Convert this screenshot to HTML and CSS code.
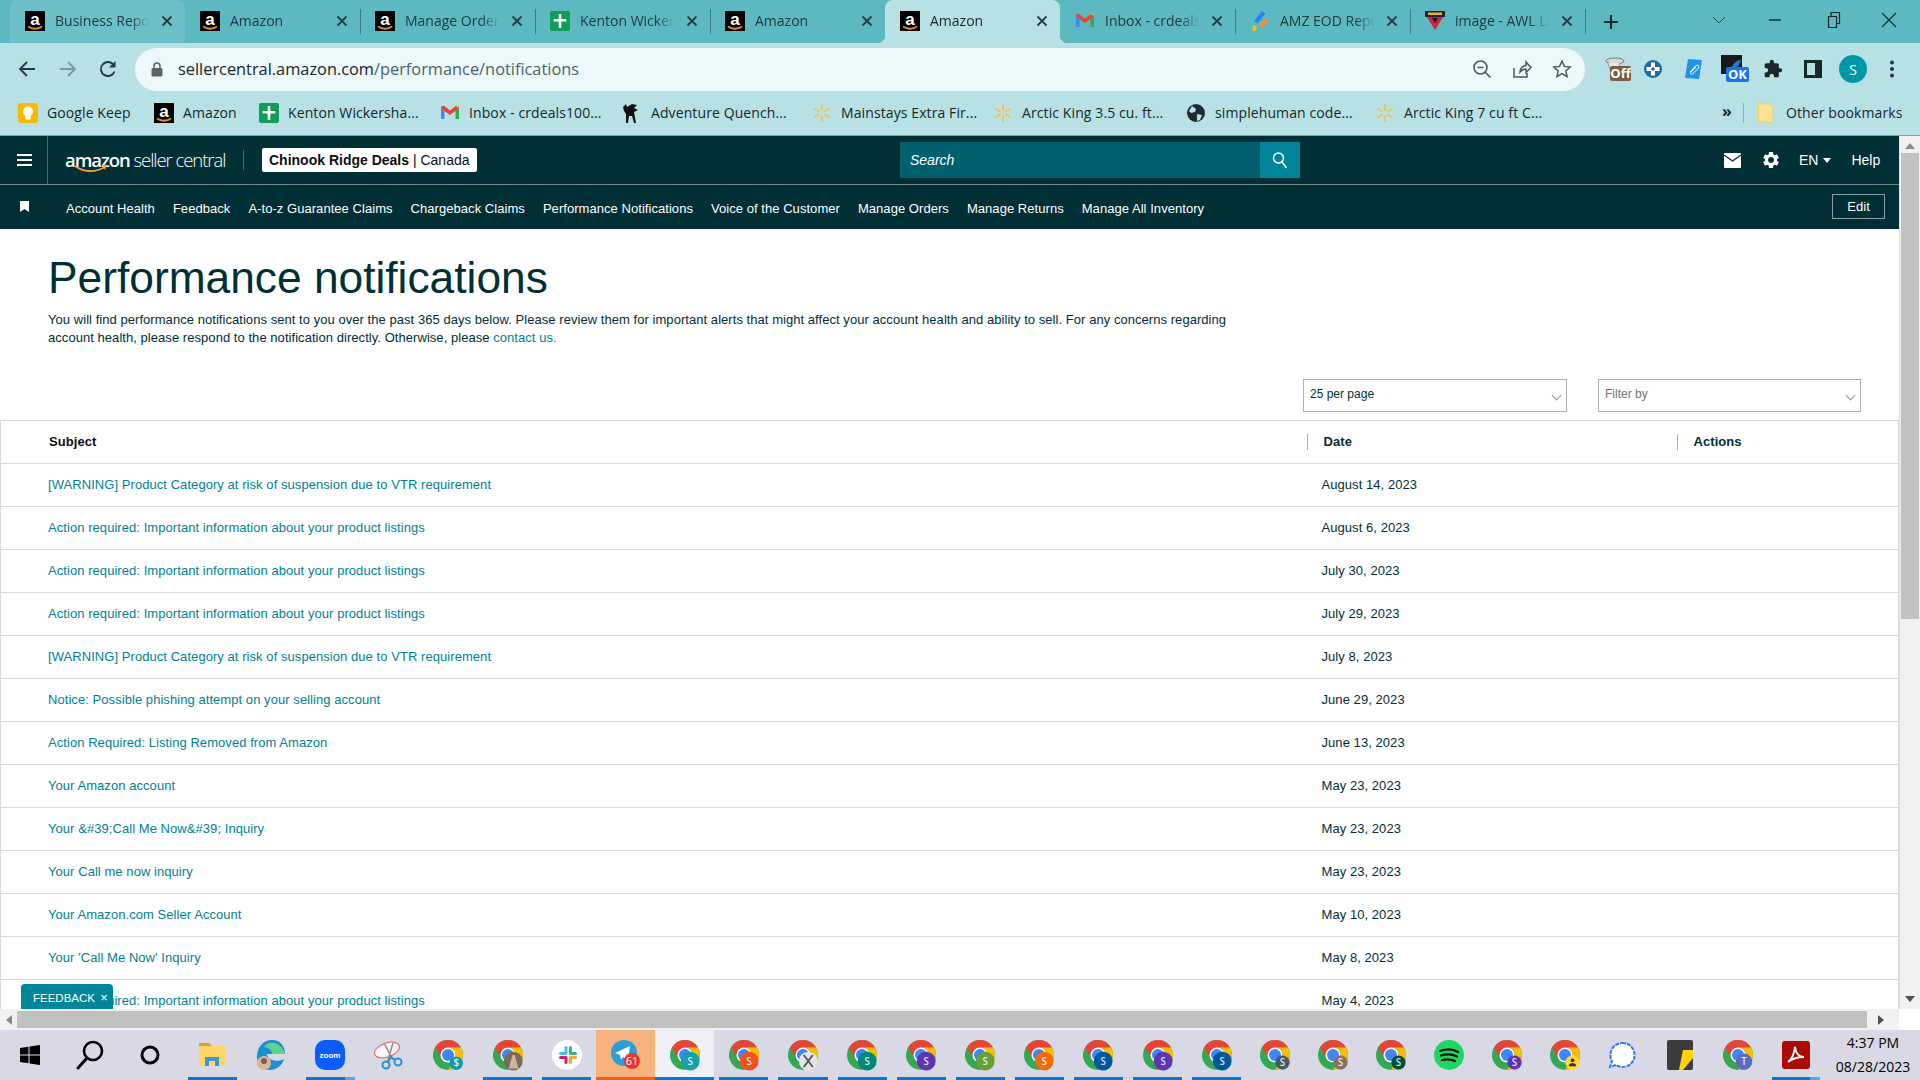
FILE: index.html
```html
<!DOCTYPE html>
<html lang="en">

<head>
    <title>Performance notifications</title>
    <meta charset="utf-8" />
    <link rel="stylesheet" href="styles.css">
</head>

<body>
    <svg class="defs" aria-hidden="true">
        <symbol id="amz" viewBox="0 0 20 20">
            <rect width="20" height="20" fill="#000" />
            <text x="10" y="14" text-anchor="middle" font-family="Liberation Sans" font-weight="700" font-size="17" fill="#fff">a</text>
            <path d="M3 15.500c4 3 10 3 14 0" fill="none" stroke="#e58a1f" stroke-width="1.800" />
        </symbol>
        <symbol id="plus-doc" viewBox="0 0 20 20">
            <rect width="20" height="20" rx="2" fill="#0f9d58" />
            <path d="M8.700 3h2.600v5h5v2.600h-5V17H8.700v-6.400h-5V8h5z" fill="#fff" />
        </symbol>
        <symbol id="gmail" viewBox="0 0 20 20">
            <path d="M1 5v11h3.500V8z" fill="#4285f4" />
            <path d="M19 5v11h-3.500V8z" fill="#34a853" />
            <path d="M1 5l3.500 3L10 12l5.500-4L19 5c0-2-2-2.800-3.500-1.700L10 7.500 4.500 3.300C3 2.200 1 3 1 5z" fill="#ea4335" />
            <path d="M15.500 3.300L19 5c0-2-2-2.800-3.500-1.700z" fill="#fbbc04" />
        </symbol>
        <symbol id="spark" viewBox="0 0 20 20">
            <path d="M10 2v5M10 13v5M3 6l4 2.500M13 11.500L17 14M3 14l4-2.500M13 8.500L17 6" stroke="#f2c14e" stroke-width="1.800" stroke-linecap="round" fill="none" />
        </symbol>
        <symbol id="chrome" viewBox="0 0 40 40">
            <circle cx="20" cy="20" r="20" fill="#34a853" />
            <path d="M20 0A20 20 0 0 0 2.700 10L11.300 25A10 10 0 0 1 20 10H37.300A20 20 0 0 0 20 0Z" fill="#ea4335" />
            <path d="M37.300 10H20A10 10 0 0 1 28.700 25L20 40A20 20 0 0 0 37.300 10Z" fill="#fbbc04" />
            <circle cx="20" cy="20" r="10" fill="#fff" />
            <circle cx="20" cy="20" r="8" fill="#4285f4" />
        </symbol>
        <symbol id="close-x" viewBox="0 0 14 14">
            <path d="M2.500 2.500l9 9M11.500 2.500l-9 9" stroke="#2b3a3d" stroke-width="1.800" fill="none" />
        </symbol>
    </svg>

    <div class="window">
        <div class="tabstrip">
            <div class="tab tab-hover"><svg class="fav"><use href="#amz" /></svg><span class="tab-title">Business Reports</span><svg class="tab-close"><use href="#close-x" /></svg></div>
            <div class="tab"><svg class="fav"><use href="#amz" /></svg><span class="tab-title">Amazon</span><svg class="tab-close"><use href="#close-x" /></svg></div>
            <div class="tab tab-sep"><svg class="fav"><use href="#amz" /></svg><span class="tab-title">Manage Orders</span><svg class="tab-close"><use href="#close-x" /></svg></div>
            <div class="tab tab-sep"><svg class="fav"><use href="#plus-doc" /></svg><span class="tab-title">Kenton Wickersham</span><svg class="tab-close"><use href="#close-x" /></svg></div>
            <div class="tab tab-sep"><svg class="fav"><use href="#amz" /></svg><span class="tab-title">Amazon</span><svg class="tab-close"><use href="#close-x" /></svg></div>
            <div class="tab tab-active"><svg class="fav"><use href="#amz" /></svg><span class="tab-title">Amazon</span><svg class="tab-close"><use href="#close-x" /></svg></div>
            <div class="tab"><svg class="fav"><use href="#gmail" /></svg><span class="tab-title">Inbox - crdeals100</span><svg class="tab-close"><use href="#close-x" /></svg></div>
            <div class="tab tab-sep">
                <svg class="fav" viewBox="0 0 20 20"><path d="M4 10L12 0l3.500 2.500-8 10z" fill="#2684ff" /><path d="M9 14l6-6.500 3 2.500-6 7z" fill="#ff8b2c" /><path d="M3 14l4 2-1.500 4H2.500z" fill="#ffc400" /></svg>
                <span class="tab-title">AMZ EOD Report</span><svg class="tab-close"><use href="#close-x" /></svg>
            </div>
            <div class="tab tab-sep">
                <svg class="fav" viewBox="0 0 20 20"><rect x="0" y="0" width="20" height="6" fill="#2b1b3d" /><path d="M2 6h16l-8 13z" fill="#d5203a" /><path d="M7 7h6l-3 5z" fill="#1c1c1c" /><rect x="3" y="1.500" width="14" height="2.500" fill="#e5b62f" /></svg>
                <span class="tab-title">image - AWL Label</span><svg class="tab-close"><use href="#close-x" /></svg>
            </div>
            <div class="new-tab tab-sep"><svg width="16" height="16" viewBox="0 0 16 16"><path d="M8 1v14M1 8h14" stroke="#17282b" stroke-width="2" /></svg></div>
            <div class="window-controls">
                <svg width="14" height="14" viewBox="0 0 14 14"><path d="M1 4l6 6 6-6" stroke="#25474c" fill="none" /></svg>
                <svg width="14" height="14" viewBox="0 0 14 14"><path d="M1 7h12" stroke="#17282b" stroke-width="1.400" /></svg>
                <svg width="14" height="18" viewBox="0 0 14 18"><path d="M1.500 5.500h8v11h-8zM4 5.500v-4h8.500v11H9.500" stroke="#17282b" fill="none" stroke-width="1.200" /></svg>
                <svg width="16" height="16" viewBox="0 0 16 16"><path d="M1 1l14 14M15 1L1 15" stroke="#17282b" stroke-width="1.100" /></svg>
            </div>
        </div>

        <div class="toolbar">
            <div class="nav-btns">
                <svg width="20" height="20" viewBox="0 0 20 20"><path d="M18 10H3M10 3l-7 7 7 7" stroke="#26383b" stroke-width="1.800" fill="none" /></svg>
                <svg width="20" height="20" viewBox="0 0 20 20"><path d="M2 10h15M10 3l7 7-7 7" stroke="#7f979b" stroke-width="1.800" fill="none" /></svg>
                <svg width="20" height="20" viewBox="0 0 20 20"><path d="M16.500 12.500A7 7 0 1 1 15 5.200" stroke="#26383b" stroke-width="1.900" fill="none" /><path d="M17.500 2v6.500H11z" fill="#26383b" /></svg>
            </div>
            <div class="omnibox">
                <svg width="12" height="15" viewBox="0 0 12 15"><path d="M3 6V4a3 3 0 0 1 6 0v2" stroke="#5f6368" stroke-width="1.500" fill="none" /><rect x="0.500" y="6" width="11" height="8.500" rx="1.500" fill="#5f6368" /></svg>
                <span class="url">sellercentral.amazon.com<span class="url-path">/performance/notifications</span></span>
                <div class="omni-icons">
                    <svg width="20" height="20" viewBox="0 0 20 20"><circle cx="8.500" cy="8.500" r="6.500" stroke="#4a5a5d" stroke-width="1.600" fill="none" /><path d="M13 13l5.500 5.500M5.500 8.500h6" stroke="#4a5a5d" stroke-width="1.600" /></svg>
                    <svg width="20" height="20" viewBox="0 0 20 20"><path d="M2 9v9h13v-4M8 13c0-4 3-6.500 6-6.500V3l5 5.500-5 5V10c-2.500 0-4.500 1-6 3z" stroke="#4a5a5d" stroke-width="1.500" fill="none" /></svg>
                    <svg width="20" height="20" viewBox="0 0 20 20"><path d="M10 2l2.400 5.400 5.800.6-4.400 3.900 1.300 5.700L10 14.600l-5.100 3 1.300-5.700L1.800 8l5.800-.6z" stroke="#4a5a5d" stroke-width="1.500" fill="none" /></svg>
                </div>
            </div>
            <div class="ext-icons">
                <svg width="28" height="28" viewBox="0 0 28 28"><ellipse cx="12" cy="6" rx="9" ry="3" fill="#d9d9d9" stroke="#7c7c7c" /><path d="M5 8l3 10h6l3-10" fill="#e8e8e8" stroke="#9a9a9a" /><rect x="7" y="11" width="21" height="15" rx="2" fill="#7a5f42" /><text x="17.500" y="23" text-anchor="middle" class="ext-off">Off</text></svg>
                <svg width="20" height="20" viewBox="0 0 20 20"><circle cx="10" cy="10" r="9" fill="#236a96" /><path d="M8 3.500h4V8h4.500v4H12v4.500H8V12H3.500V8H8z" fill="#fff" /><circle cx="10" cy="10" r="1.800" fill="#236a96" /></svg>
                <svg width="20" height="22" viewBox="0 0 20 22"><path d="M5 1l14 1-3 19-14-1z" fill="#1e96e8" /><path d="M7 14l6-6.500a1.800 1.800 0 0 1 2.500 2.500L9.500 16a1.200 1.200 0 0 1-1.700-1.700L13 9" stroke="#fff" fill="none" /></svg>
                <svg width="28" height="28" viewBox="0 0 28 28"><rect x="0" y="0" width="21" height="19" fill="#17191c" /><path d="M10 14c2-6 6-9 10-9-1 5-5 9-10 9z" fill="#1c7fd6" /><rect x="5" y="12" width="23" height="15" rx="2" fill="#1a73e8" /><text x="16.500" y="24" text-anchor="middle" class="ext-ok">OK</text></svg>
                <svg width="20" height="20" viewBox="0 0 24 24"><path d="M20.500 11H19V7c0-1.100-.9-2-2-2h-4V3.500C13 2.120 11.880 1 10.500 1S8 2.120 8 3.500V5H4c-1.100 0-1.990.9-1.990 2v3.800H3.500c1.490 0 2.700 1.210 2.700 2.700s-1.210 2.700-2.700 2.700H2V20c0 1.100.9 2 2 2h3.800v-1.500c0-1.490 1.210-2.700 2.700-2.700 1.490 0 2.700 1.210 2.700 2.700V22H17c1.100 0 2-.9 2-2v-4h1.500c1.380 0 2.500-1.120 2.500-2.500S21.880 11 20.500 11z" fill="#17282b" /></svg>
                <svg width="18" height="18" viewBox="0 0 18 18"><path d="M0 0h18v18H0zM3 3v12h8V3z" fill="#17282b" fill-rule="evenodd" /></svg>
                <span class="avatar">S</span>
                <svg width="6" height="18" viewBox="0 0 6 18"><circle cx="3" cy="2.500" r="2" fill="#26383b" /><circle cx="3" cy="9" r="2" fill="#26383b" /><circle cx="3" cy="15.500" r="2" fill="#26383b" /></svg>
            </div>
        </div>

        <div class="bookmarks">
            <span class="bm bm-keep"><svg class="fav" viewBox="0 0 20 20"><rect width="20" height="20" rx="3" fill="#fbb900" /><circle cx="10" cy="8.500" r="5" fill="#fff" /><rect x="7.500" y="13" width="5" height="3.500" fill="#fff" /></svg>Google Keep</span>
            <span class="bm bm-amazon"><svg class="fav"><use href="#amz" /></svg>Amazon</span>
            <span class="bm bm-kenton"><svg class="fav"><use href="#plus-doc" /></svg>Kenton Wickersha...</span>
            <span class="bm bm-inbox"><svg class="fav"><use href="#gmail" /></svg>Inbox - crdeals100...</span>
            <span class="bm bm-adventure"><svg class="fav" viewBox="0 0 20 20"><path d="M1 4l3-3 1 3 5-3 5 1-3 3 4 2-4 2 2 11h-2l-2-7H7l-1 7H4V11L2 8z" fill="#111" /></svg>Adventure Quench...</span>
            <span class="bm bm-mainstays"><svg class="fav"><use href="#spark" /></svg>Mainstays Extra Fir...</span>
            <span class="bm bm-arctic"><svg class="fav"><use href="#spark" /></svg>Arctic King 3.5 cu. ft...</span>
            <span class="bm bm-simple"><svg class="fav" viewBox="0 0 20 20"><circle cx="10" cy="10" r="9" fill="#1d2b2e" /><path d="M6 3l4 3-1 3-4 1-2-2zM11 11l5 1-2 5-3 1z" fill="#b8e1e5" /></svg>simplehuman code...</span>
            <span class="bm bm-arctic7"><svg class="fav"><use href="#spark" /></svg>Arctic King 7 cu ft C...</span>
            <span class="bm-more">»</span>
            <span class="bm bm-other"><svg class="fav-folder" viewBox="0 0 16 22"><path d="M0 1h12l4 3v17H0z" fill="#fde293" stroke="#f2cd5c" /></svg>Other bookmarks</span>
        </div>

        <div class="viewport">
            <div class="page">
                <header class="sc-top">
                    <div class="burger"><span></span><span></span><span></span></div>
                    <div class="sc-logo">
                        <div class="logo-word"><b>amazon</b> seller central</div>
                        <svg class="logo-smile" viewBox="0 0 34 8"><path d="M1 1c8 6 20 7 30 1" stroke="#f2a33a" stroke-width="1.800" fill="none" /><path d="M33 0l-5 0 3 5z" fill="#f2a33a" /></svg>
                    </div>
                    <div class="sc-account"><span><b>Chinook Ridge Deals</b> | Canada</span></div>
                    <div class="sc-search">
                        <span class="sc-search-input">Search</span>
                        <span class="sc-search-btn"><svg width="16" height="18" viewBox="0 0 16 18"><circle cx="6.500" cy="7" r="5" stroke="#fff" stroke-width="1.500" fill="none" /><path d="M10 11l4.500 6" stroke="#fff" stroke-width="1.500" /></svg></span>
                    </div>
                    <div class="sc-right">
                        <svg width="17" height="15" viewBox="0 0 17 15"><path d="M1 0h15a1 1 0 0 1 1 1v13a1 1 0 0 1-1 1H1a1 1 0 0 1-1-1V1a1 1 0 0 1 1-1z" fill="#fff" /><path d="M0 2l8.500 6L17 2" stroke="#002f36" stroke-width="1.400" fill="none" /></svg>
                        <svg width="20" height="20" viewBox="0 0 24 24"><path fill="#fff" fill-rule="evenodd" d="M19.140 12.940c.04-.3.06-.61.06-.94 0-.32-.02-.64-.07-.94l2.030-1.580c.18-.14.23-.41.12-.61l-1.920-3.320c-.12-.22-.37-.29-.59-.22l-2.390.96c-.5-.38-1.030-.7-1.620-.94l-.36-2.540c-.04-.24-.24-.41-.48-.41h-3.840c-.24 0-.43.17-.47.41l-.36 2.540c-.59.24-1.130.57-1.620.94l-2.390-.96c-.22-.08-.47 0-.59.22L2.740 8.870c-.12.21-.08.47.12.61l2.030 1.580c-.05.3-.09.63-.09.94s.02.64.07.94l-2.030 1.580c-.18.14-.23.41-.12.61l1.920 3.320c.12.22.37.29.59.22l2.390-.96c.5.38 1.030.7 1.620.94l.36 2.540c.05.24.24.41.48.41h3.840c.24 0 .44-.17.47-.41l.36-2.540c.59-.24 1.130-.56 1.620-.94l2.390.96c.22.08.47 0 .59-.22l1.920-3.320c.12-.22.07-.47-.12-.61l-2.010-1.580zM12 15.600c-1.980 0-3.600-1.620-3.600-3.600s1.620-3.600 3.600-3.600 3.600 1.620 3.600 3.600-1.620 3.600-3.600 3.600z" /></svg>
                        <span class="sc-lang">EN<i class="caret"></i></span>
                        <span class="sc-help">Help</span>
                    </div>
                </header>
                <nav class="sc-nav">
                    <svg class="sc-mark" width="9" height="11" viewBox="0 0 9 11"><path d="M0 0h9v11L4.500 8 0 11z" fill="#fff" /></svg>
                    <a>Account Health</a>
                    <a>Feedback</a>
                    <a>A-to-z Guarantee Claims</a>
                    <a>Chargeback Claims</a>
                    <a>Performance Notifications</a>
                    <a>Voice of the Customer</a>
                    <a>Manage Orders</a>
                    <a>Manage Returns</a>
                    <a>Manage All Inventory</a>
                    <span class="sc-edit">Edit</span>
                </nav>

                <main class="content">
                    <h1>Performance notifications</h1>
                    <p class="intro">You will find performance notifications sent to you over the past 365 days below. Please review them for important alerts that might affect your account health and ability to sell. For any concerns regarding account health, please respond to the notification directly. Otherwise, please <a>contact us.</a></p>
                    <div class="filters">
                        <div class="select">25 per page<i class="chev"></i></div>
                        <div class="select select-muted">Filter by<i class="chev"></i></div>
                    </div>
                    <table class="notifications">
                        <thead>
                            <tr>
                                <th class="col-subject">Subject</th>
                                <th class="col-date"><span>Date</span></th>
                                <th class="col-actions"><span>Actions</span></th>
                            </tr>
                        </thead>
                        <tbody>
                            <tr><td><a>[WARNING] Product Category at risk of suspension due to VTR requirement</a></td><td>August 14, 2023</td><td></td></tr>
                            <tr><td><a>Action required: Important information about your product listings</a></td><td>August 6, 2023</td><td></td></tr>
                            <tr><td><a>Action required: Important information about your product listings</a></td><td>July 30, 2023</td><td></td></tr>
                            <tr><td><a>Action required: Important information about your product listings</a></td><td>July 29, 2023</td><td></td></tr>
                            <tr><td><a>[WARNING] Product Category at risk of suspension due to VTR requirement</a></td><td>July 8, 2023</td><td></td></tr>
                            <tr><td><a>Notice: Possible phishing attempt on your selling account</a></td><td>June 29, 2023</td><td></td></tr>
                            <tr><td><a>Action Required: Listing Removed from Amazon</a></td><td>June 13, 2023</td><td></td></tr>
                            <tr><td><a>Your Amazon account</a></td><td>May 23, 2023</td><td></td></tr>
                            <tr><td><a>Your &amp;#39;Call Me Now&amp;#39; Inquiry</a></td><td>May 23, 2023</td><td></td></tr>
                            <tr><td><a>Your Call me now inquiry</a></td><td>May 23, 2023</td><td></td></tr>
                            <tr><td><a>Your Amazon.com Seller Account</a></td><td>May 10, 2023</td><td></td></tr>
                            <tr><td><a>Your 'Call Me Now' Inquiry</a></td><td>May 8, 2023</td><td></td></tr>
                            <tr><td><a>Action required: Important information about your product listings</a></td><td>May 4, 2023</td><td></td></tr>
                        </tbody>
                    </table>
                </main>
                <div class="feedback">FEEDBACK <span>×</span></div>
            </div>
            <div class="vscroll">
                <i class="arrow arrow-up"></i>
                <div class="vthumb"></div>
                <i class="arrow arrow-down"></i>
            </div>
        </div>

        <div class="hscroll">
            <i class="arrow arrow-left"></i>
            <div class="hthumb"></div>
            <i class="arrow arrow-right"></i>
            <div class="corner"></div>
        </div>

        <div class="taskbar">
            <div class="tb-start">
                <svg width="20" height="20" viewBox="0 0 20 20"><path d="M0 3l8.500-1.200V9.500H0zM9.500 1.600L20 0v9.500H9.500zM0 10.500h8.500v7.700L0 17zM9.500 10.500H20V20L9.500 18.400z" fill="#000" /></svg>
            </div>
            <div class="tb-start">
                <svg width="28" height="30" viewBox="0 0 28 30"><circle cx="17" cy="11" r="9" stroke="#000" stroke-width="2.600" fill="none" /><path d="M11 18L2 28" stroke="#000" stroke-width="3" stroke-linecap="round" /></svg>
            </div>
            <div class="tb-start tb-start-last">
                <svg width="20" height="20" viewBox="0 0 20 20"><circle cx="10" cy="10" r="8" stroke="#000" stroke-width="3" fill="none" /></svg>
            </div>

            <div class="tb-item on"><svg viewBox="0 0 30 30"><path d="M2 3h10l3 3H2z" fill="#e0a21b" /><rect x="2" y="6" width="26" height="20" fill="#fcd766" /><path d="M8 26v-9h14v9h-4v-5h-6v5z" fill="#3e96dc" /></svg></div>
            <div class="tb-item"><svg viewBox="0 0 30 30"><path d="M1 15C2 6 8 0 16 0c8 0 13 6 13 14H11c0 6 10 9 17 5-2 7-8 11-14 11C6 30 0 24 1 15z" fill="#1b8fd2" /><path d="M8 7c5-7 17-6 21 7H16c0-4-4-7-8-7z" fill="#5fd38a" /><circle cx="8" cy="23" r="7" fill="#d9b99b" /><circle cx="8" cy="21" r="3" fill="#8c5a3c" /></svg></div>
            <div class="tb-item on on-multi"><svg viewBox="0 0 30 30"><rect width="30" height="30" rx="10" fill="#0b5cff" /><text x="15" y="18" text-anchor="middle" class="tb-zoom">zoom</text></svg></div>
            <div class="tb-item"><svg viewBox="0 0 30 30"><ellipse cx="13" cy="10" rx="13" ry="7" transform="rotate(-20 13 10)" fill="#fdf4f4" stroke="#e05a5a" /><path d="M10 3l9 17M19 3l-5 17" stroke="#8d8d8d" stroke-width="1.500" /><circle cx="12" cy="25" r="3.500" fill="none" stroke="#2e8ed6" stroke-width="2" /><circle cx="24" cy="22" r="3.500" fill="none" stroke="#2e8ed6" stroke-width="2" /><path d="M14 22l3-5 4 3" stroke="#2e8ed6" stroke-width="2" fill="none" /></svg></div>
            <div class="tb-item"><svg viewBox="0 0 40 40"><use href="#chrome" /><circle cx="31" cy="31" r="9" fill="#0e9aa7" /><text x="31" y="35" text-anchor="middle" class="badge-s">$</text></svg></div>
            <div class="tb-item on"><svg viewBox="0 0 40 40"><use href="#chrome" /><circle cx="27" cy="28" r="12.500" fill="#7b6a58" /><path d="M21 38l5-18h3l5 18z" fill="#c9b7a4" /></svg></div>
            <div class="tb-item on"><svg viewBox="0 0 30 30"><circle cx="15" cy="15" r="15" fill="#fff" /><rect x="12.500" y="6" width="3" height="8" rx="1.500" fill="#36c5f0" /><rect x="7" y="12" width="8" height="3" rx="1.500" fill="#36c5f0" /><rect x="17" y="6" width="3" height="8" rx="1.500" fill="#2eb67d" /><rect x="17" y="12" width="8" height="3" rx="1.500" fill="#2eb67d" /><rect x="17" y="16" width="3" height="8" rx="1.500" fill="#ecb22e" /><rect x="17" y="16" width="8" height="3" rx="1.500" fill="#ecb22e" /><rect x="12.500" y="16" width="3" height="8" rx="1.500" fill="#e01e5a" /><rect x="7" y="16" width="8" height="3" rx="1.500" fill="#e01e5a" /></svg></div>
            <div class="tb-item on-orange"><svg viewBox="0 0 30 30"><circle cx="13" cy="14" r="13" fill="#2a9ed8" /><path d="M4 14l15-7-2 14-5-3-2 3-1-5z" fill="#fff" /><circle cx="21" cy="22" r="8" fill="#e8372c" /><text x="21" y="26" text-anchor="middle" class="badge-n">61</text></svg></div>
            <div class="tb-item on on-active"><svg viewBox="0 0 40 40"><use href="#chrome" /><circle cx="27" cy="28" r="12.500" fill="#17a0ad" /><text x="27" y="33" text-anchor="middle" class="badge-s">S</text></svg></div>
            <div class="tb-item on"><svg viewBox="0 0 40 40"><use href="#chrome" /><circle cx="27" cy="28" r="12.500" fill="#f4511e" /><text x="27" y="33" text-anchor="middle" class="badge-s">S</text></svg></div>
            <div class="tb-item on"><svg viewBox="0 0 40 40"><use href="#chrome" /><circle cx="27" cy="28" r="12.500" fill="#e5e5e5" /><path d="M21 20l12 16M33 20L21 36" stroke="#555" stroke-width="2.500" /></svg></div>
            <div class="tb-item on"><svg viewBox="0 0 40 40"><use href="#chrome" /><circle cx="27" cy="28" r="12.500" fill="#00897b" /><text x="27" y="33" text-anchor="middle" class="badge-s">S</text></svg></div>
            <div class="tb-item on"><svg viewBox="0 0 40 40"><use href="#chrome" /><circle cx="27" cy="28" r="12.500" fill="#5e35b1" /><text x="27" y="33" text-anchor="middle" class="badge-s">S</text></svg></div>
            <div class="tb-item on"><svg viewBox="0 0 40 40"><use href="#chrome" /><circle cx="27" cy="28" r="12.500" fill="#689f38" /><text x="27" y="33" text-anchor="middle" class="badge-s">S</text></svg></div>
            <div class="tb-item on"><svg viewBox="0 0 40 40"><use href="#chrome" /><circle cx="27" cy="28" r="12.500" fill="#ef6c00" /><text x="27" y="33" text-anchor="middle" class="badge-s">S</text></svg></div>
            <div class="tb-item on"><svg viewBox="0 0 40 40"><use href="#chrome" /><circle cx="27" cy="28" r="12.500" fill="#01579b" /><text x="27" y="33" text-anchor="middle" class="badge-s">S</text></svg></div>
            <div class="tb-item on"><svg viewBox="0 0 40 40"><use href="#chrome" /><circle cx="27" cy="28" r="12.500" fill="#5e35b1" /><text x="27" y="33" text-anchor="middle" class="badge-s">S</text></svg></div>
            <div class="tb-item on"><svg viewBox="0 0 40 40"><use href="#chrome" /><circle cx="27" cy="28" r="12.500" fill="#01579b" /><text x="27" y="33" text-anchor="middle" class="badge-s">S</text></svg></div>
            <div class="tb-item tb-small"><svg viewBox="0 0 40 40"><use href="#chrome" /><circle cx="30" cy="30" r="9.500" fill="#455a64" /><text x="30" y="34" text-anchor="middle" class="badge-s">S</text></svg></div>
            <div class="tb-item tb-small"><svg viewBox="0 0 40 40"><use href="#chrome" /><circle cx="30" cy="30" r="9.500" fill="#8d6e63" /><text x="30" y="34" text-anchor="middle" class="badge-s">S</text></svg></div>
            <div class="tb-item tb-small"><svg viewBox="0 0 40 40"><use href="#chrome" /><circle cx="30" cy="30" r="9.500" fill="#004d40" /><text x="30" y="34" text-anchor="middle" class="badge-s">S</text></svg></div>
            <div class="tb-item tb-small"><svg viewBox="0 0 30 30"><circle cx="15" cy="15" r="15" fill="#1ed760" /><path d="M6 11c6-2 13-2 18 1M7 15.500c5-1.500 11-1.500 16 1M8 20c4-1 9-1 13 1" stroke="#111" stroke-width="2.200" stroke-linecap="round" fill="none" /></svg></div>
            <div class="tb-item tb-small"><svg viewBox="0 0 40 40"><use href="#chrome" /><circle cx="30" cy="30" r="9.500" fill="#5e35b1" /><text x="30" y="34" text-anchor="middle" class="badge-s">S</text></svg></div>
            <div class="tb-item tb-small"><svg viewBox="0 0 40 40"><use href="#chrome" /><circle cx="30" cy="30" r="9.500" fill="#fdd835" /><circle cx="30" cy="27" r="2.500" fill="#333" /><path d="M25 35c0-6 10-6 10 0z" fill="#333" /></svg></div>
            <div class="tb-item tb-small"><svg viewBox="0 0 30 30"><path d="M15 3a12 12 0 1 1-6 22l-6 2 2-6A12 12 0 0 1 15 3z" fill="#fff" stroke="#3a76f0" stroke-width="2" stroke-dasharray="4 1" /></svg></div>
            <div class="tb-item tb-small"><svg viewBox="0 0 30 30"><rect x="2" y="0" width="26" height="30" rx="2" fill="#3b3b3b" /><path d="M28 10v8L18 30h-4l4-20z" fill="#ffd400" /></svg></div>
            <div class="tb-item tb-small"><svg viewBox="0 0 40 40"><use href="#chrome" /><circle cx="28" cy="29" r="11" fill="#5c6bc0" /><text x="28" y="33.500" text-anchor="middle" class="badge-s">T</text></svg></div>
            <div class="tb-item tb-small on on-multi"><svg viewBox="0 0 30 30"><rect x="1" y="1" width="28" height="28" rx="3" fill="#ad0b00" /><path d="M7 22c3-2 6-8 7-15 1 7 4 10 9 10-6 0-11 1-16 5z" fill="none" stroke="#fff" stroke-width="1.800" /></svg></div>

            <div class="tb-clock">
                <span>4:37 PM</span>
                <span>08/28/2023</span>
            </div>
        </div>
    </div>
</body>

</html>
```

FILE: styles.css
```css
* {
    box-sizing: border-box;
}

body {
    margin: 0;
    overflow: hidden;
    font-family: "Liberation Sans", Arial, sans-serif;
}

.defs {
    display: none;
}

.window {
    width: 1920px;
    height: 1080px;
    display: flex;
    flex-direction: column;
    overflow: hidden;
}

/* browser tabs */
.tabstrip {
    height: 43px;
    flex: none;
    display: flex;
    padding-left: 10px;
    background: #5cb9c2;
    font-family: "Open Sans", sans-serif;
    font-size: 14px;
    color: #24393d;
}

.tab {
    position: relative;
    width: 175px;
    display: flex;
    align-items: center;
    gap: 10px;
    padding: 0 11px 2px 15px;
}

.tab-hover {
    background: #6cc1c9;
    border-radius: 8px 8px 0 0;
}

.tab-active {
    background: #b8e1e5;
    border-radius: 8px 8px 0 0;
    color: #17282b;
}

.tab-active::before,
.tab-active::after {
    content: "";
    position: absolute;
    bottom: 0;
    width: 8px;
    height: 8px;
}

.tab-active::before {
    left: -8px;
    background: radial-gradient(circle at 0 0, transparent 8px, #b8e1e5 8.500px);
}

.tab-active::after {
    right: -8px;
    background: radial-gradient(circle at 100% 0, transparent 8px, #b8e1e5 8.500px);
}

.tab-sep::before {
    content: "";
    position: absolute;
    left: 0;
    top: 9px;
    height: 25px;
    width: 1px;
    background: #3b7f87;
}

.fav {
    width: 20px;
    height: 20px;
    flex: none;
}

.tab-title {
    flex: 1;
    overflow: hidden;
    white-space: nowrap;
    -webkit-mask-image: linear-gradient(to right, #000 80%, transparent 100%);
    mask-image: linear-gradient(to right, #000 80%, transparent 100%);
}

.tab-close {
    width: 14px;
    height: 14px;
    flex: none;
}

.new-tab {
    position: relative;
    width: 52px;
    display: flex;
    align-items: center;
    justify-content: center;
}

.window-controls {
    margin-left: auto;
    display: grid;
    grid-template-columns: 42px 70px 48px 62px;
    align-items: center;
    justify-items: center;
    padding-bottom: 4px;
}

/* address bar */
.toolbar {
    height: 52px;
    flex: none;
    display: flex;
    align-items: center;
    background: #b8e1e5;
    padding-left: 7px;
}

.nav-btns {
    width: 128px;
    display: grid;
    grid-template-columns: 40px 41px 39px;
    justify-items: center;
}

.omnibox {
    width: 1450px;
    height: 43px;
    display: flex;
    align-items: center;
    padding-left: 16px;
    border-radius: 22px;
    background: #ecf8f9;
}

.url {
    margin-left: 15px;
    font-family: "Open Sans", sans-serif;
    font-size: 16.350px;
    color: #17282b;
}

.url-path {
    color: #4d6468;
}

.omni-icons {
    margin-left: auto;
    display: flex;
    gap: 20px;
    padding-right: 13px;
}

.ext-icons {
    margin-left: 13px;
    display: grid;
    grid-template-columns: 38px 34px 46px 38px 38px 42px 38px 40px;
    justify-items: center;
    align-items: center;
}

.ext-off,
.ext-ok {
    font-family: "Open Sans", sans-serif;
    font-weight: 700;
    font-size: 13px;
    fill: #fff;
}

.avatar {
    width: 28px;
    height: 28px;
    display: flex;
    align-items: center;
    justify-content: center;
    border-radius: 50%;
    background: #0097a7;
    color: #fff;
    font-family: "Open Sans", sans-serif;
    font-size: 14px;
}

/* bookmarks bar */
.bookmarks {
    height: 41px;
    flex: none;
    display: flex;
    align-items: center;
    padding: 0 0 5px 18px;
    background: #b8e1e5;
    border-bottom: 1px solid #7fa6ab;
    font-family: "Open Sans", sans-serif;
    font-size: 14px;
    letter-spacing: 0.1px;
    color: #17282b;
    white-space: nowrap;
}

.bm {
    display: flex;
    align-items: center;
    gap: 9px;
}

.bm-keep { width: 136px; }
.bm-amazon { width: 105px; }
.bm-kenton { width: 181px; }
.bm-inbox { width: 182px; }
.bm-adventure { width: 190px; }
.bm-mainstays { width: 181px; }
.bm-arctic { width: 193px; }
.bm-simple { width: 189px; }
.bm-arctic7 { width: 347px; }

.bm-more {
    width: 21px;
    font-weight: 700;
    font-size: 16px;
    padding-bottom: 4px;
}

.bm-other {
    gap: 13px;
    padding-left: 14px;
    border-left: 1px solid #8fb3b7;
}

.fav-folder {
    width: 15px;
    height: 20px;
}

/* seller central page */
.viewport {
    flex: 1;
    min-height: 0;
    display: flex;
}

.page {
    position: relative;
    width: 1899px;
    height: 100%;
    overflow: hidden;
    background: #fff;
}

.sc-top {
    height: 49px;
    display: flex;
    align-items: center;
    background: #002f36;
    border-bottom: 1px solid #6c8589;
    color: #fff;
}

.burger {
    width: 48px;
    height: 48px;
    display: flex;
    flex-direction: column;
    justify-content: center;
    gap: 3px;
    padding-left: 17px;
    border-right: 1px solid #4c6a6f;
}

.burger span {
    width: 15px;
    height: 2px;
    background: #fff;
}

.sc-logo {
    position: relative;
    width: 197px;
    height: 48px;
    margin-left: 17px;
}

.logo-word {
    padding-top: 11px;
    font-family: "Open Sans", sans-serif;
    font-size: 18.500px;
    font-weight: 300;
    letter-spacing: -1.050px;
    white-space: nowrap;
}

.logo-word b {
    font-weight: 600;
}

.logo-smile {
    position: absolute;
    left: 9px;
    top: 29px;
    width: 34px;
    height: 8px;
}

.sc-logo::after {
    content: "";
    position: absolute;
    left: 178px;
    top: 14px;
    width: 1px;
    height: 20px;
    background: #4c6a6f;
}

.sc-account {
    width: 215px;
    height: 24px;
    display: flex;
    align-items: center;
    padding-left: 7px;
    background: #fff;
    border-radius: 2px;
    color: #0f1111;
    font-size: 14px;
    white-space: nowrap;
}

.sc-search {
    margin-left: 423px;
    width: 400px;
    height: 36px;
    display: flex;
    background: #00606d;
}

.sc-search-input {
    flex: 1;
    padding-left: 10px;
    line-height: 36px;
    font-size: 14px;
    font-style: italic;
}

.sc-search-btn {
    width: 40px;
    display: flex;
    align-items: center;
    justify-content: center;
    background: #00869a;
}

.sc-right {
    margin-left: 424px;
    display: flex;
    align-items: center;
    gap: 20px;
    font-size: 14px;
}

.sc-lang {
    display: flex;
    align-items: center;
    gap: 5px;
    margin-left: -2px;
}

.caret {
    border: 4px solid transparent;
    border-top: 5px solid #fff;
    border-bottom: 0;
}

.sc-nav {
    height: 44px;
    display: flex;
    align-items: center;
    gap: 18px;
    padding-top: 2px;
    background: #002f36;
    color: #fff;
    font-size: 13px;
    letter-spacing: 0.05px;
    white-space: nowrap;
}

.sc-mark {
    margin: 0 19px 3px 20px;
    flex: none;
}

.sc-edit {
    margin-left: auto;
    margin-right: 14px;
    width: 53px;
    height: 25px;
    display: flex;
    align-items: center;
    justify-content: center;
    margin-bottom: 4px;
    border: 1px solid #8ba0a4;
}

.content h1 {
    margin: 0;
    padding: 25px 0 0 48px;
    height: 73px;
    font-size: 44.300px;
    font-weight: 400;
    line-height: 48px;
    color: #002f36;
}

.intro {
    width: 1200px;
    margin: 9px 0 0 48px;
    font-size: 13px;
    letter-spacing: 0.05px;
    line-height: 18px;
    color: #002f36;
}

.intro a,
.notifications a {
    color: #008296;
}

.filters {
    display: flex;
    justify-content: flex-end;
    gap: 31px;
    padding: 32px 38px 0 0;
}

.select {
    position: relative;
    width: 264px;
    height: 33px;
    padding-left: 6px;
    border: 1px solid #a6b2b3;
    font-size: 12px;
    line-height: 29px;
    color: #002f36;
}

.select-muted {
    width: 263px;
    color: #6c7778;
}

.chev {
    position: absolute;
    right: 6px;
    top: 12px;
    width: 7px;
    height: 7px;
    border-right: 1.500px solid #8a9596;
    border-bottom: 1.500px solid #8a9596;
    transform: rotate(45deg);
}

.notifications {
    width: 1899px;
    margin-top: 8px;
    border-collapse: collapse;
    table-layout: fixed;
    border-left: 1px solid #d5dbdb;
    border-right: 1px solid #d5dbdb;
    font-size: 13px;
    letter-spacing: 0.06px;
    color: #002f36;
}

.notifications th,
.notifications td {
    height: 43px;
    padding: 0;
    text-align: left;
    border-top: 1px solid #d5dbdb;
    border-bottom: 1px solid #d5dbdb;
}

.notifications td {
    padding-bottom: 2px;
}

.notifications td:first-child {
    padding-left: 47px;
}

.notifications td:nth-child(2) {
    padding-left: 15px;
}

.col-subject {
    width: 1306px;
    padding-left: 48px !important;
    padding-bottom: 2px !important;
    color: #0f1111;
}

.col-date {
    width: 370px;
}

.col-date span,
.col-actions span {
    display: block;
    padding-left: 16px;
    line-height: 16px;
    border-left: 1px solid #a6b2b3;
}

.feedback {
    position: absolute;
    left: 21px;
    bottom: 0;
    width: 92px;
    height: 25px;
    padding-left: 12px;
    background: #00869a;
    border-radius: 4px 4px 0 0;
    color: #fff;
    font-size: 11.500px;
    line-height: 27px;
    white-space: nowrap;
}

.feedback span {
    margin-left: 2px;
    font-size: 13px;
}

/* fake scrollbars */
.vscroll {
    width: 21px;
    display: flex;
    flex-direction: column;
    align-items: center;
    background: #f1f1f1;
    border-left: 1px solid #e2e2e2;
}

.vthumb {
    width: 18px;
    height: 466px;
    margin-top: 4px;
    background: #c1c1c1;
}

.arrow {
    border: 5px solid transparent;
}

.arrow-up {
    margin-top: 7px;
    border-bottom: 6px solid #8b8b8b;
    border-top: 0;
}

.arrow-down {
    margin-top: auto;
    margin-bottom: 7px;
    border-top: 6px solid #505050;
    border-bottom: 0;
}

.hscroll {
    height: 21px;
    flex: none;
    display: flex;
    align-items: center;
    background: #f1f1f1;
}

.hthumb {
    width: 1850px;
    height: 17px;
    margin-left: 5px;
    background: #c1c1c1;
}

.arrow-left {
    margin-left: 6px;
    border-right: 6px solid #8b8b8b;
    border-left: 0;
}

.arrow-right {
    margin-left: 11px;
    border-left: 6px solid #505050;
    border-right: 0;
}

.corner {
    margin-left: auto;
    width: 21px;
    height: 21px;
    background: #fff;
}

/* windows taskbar */
.taskbar {
    height: 50px;
    flex: none;
    display: flex;
    background: #d8d9e4;
}

.tb-start {
    width: 60px;
    display: flex;
    align-items: center;
    justify-content: center;
}

.tb-start-last {
    margin-right: 2.500px;
}

.tb-item {
    position: relative;
    width: 59.100px;
    display: flex;
    align-items: center;
    justify-content: center;
}

.tb-small {
    width: 57.900px;
}

.tb-item svg {
    width: 30px;
    height: 30px;
    overflow: visible;
}

.tb-item.on::after {
    content: "";
    position: absolute;
    left: 5px;
    right: 5px;
    bottom: 0;
    height: 3px;
    background: #0078d7;
}

.tb-item.on-multi::after {
    background: linear-gradient(to right, #0078d7 80%, #5ba7e3 80%);
}

.tb-item.on-active {
    background: #eff0f5;
}

.tb-item.on-active::after {
    left: 0;
    right: 0;
}

.on-orange {
    background: #f7b27e;
    border-bottom: 3px solid #f7630c;
}

.tb-zoom {
    font-family: "Liberation Sans", sans-serif;
    font-size: 8px;
    font-weight: 700;
    fill: #fff;
}

.badge-s {
    font-family: "Open Sans", sans-serif;
    font-size: 13px;
    font-weight: 600;
    fill: rgba(255, 255, 255, 0.85);
}

.badge-n {
    font-family: "Open Sans", sans-serif;
    font-size: 11px;
    fill: #fff;
}

.tb-clock {
    margin-left: auto;
    width: 86px;
    display: flex;
    flex-direction: column;
    align-items: center;
    justify-content: center;
    gap: 6px;
    padding-right: 8px;
    font-family: "Open Sans", sans-serif;
    font-size: 14px;
    line-height: 18px;
    color: #000;
    white-space: nowrap;
}
```
